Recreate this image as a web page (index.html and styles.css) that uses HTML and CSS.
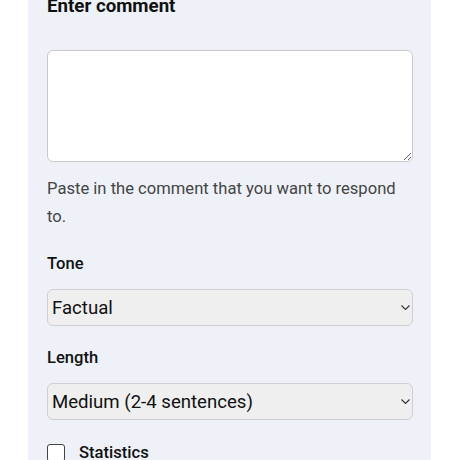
FILE: index.html
```html
<!DOCTYPE html>
<html lang="en">
<head>
    <meta charset="UTF-8">
    <meta name="viewport" content="width=device-width, initial-scale=1.0">
    <title>Comment reply</title>
    <link rel="stylesheet" href="styles.css">
</head>
<body>
    <div class="panel">
        <h2 class="title">Enter comment</h2>
        <textarea class="comment" id="comment"></textarea>
        <p class="hint">Paste in the comment that you want to respond to.</p>

        <label class="field-label" for="tone">Tone</label>
        <div class="select-wrap">
            <select class="select" id="tone">
                <option>Factual</option>
                <option>Friendly</option>
                <option>Formal</option>
            </select>
            <svg class="chevron" viewBox="0 0 9 5" width="9" height="5"><path d="M0.5 0.5l4 4 4-4" fill="none" stroke="#333" stroke-width="1.1"/></svg>
        </div>

        <label class="field-label field-label-tight" for="length">Length</label>
        <div class="select-wrap">
            <select class="select" id="length">
                <option>Medium (2-4 sentences)</option>
                <option>Short (1 sentence)</option>
                <option>Long (5+ sentences)</option>
            </select>
            <svg class="chevron" viewBox="0 0 9 5" width="9" height="5"><path d="M0.5 0.5l4 4 4-4" fill="none" stroke="#333" stroke-width="1.1"/></svg>
        </div>

        <label class="check">
            <input type="checkbox" class="check-box">
            <span>Statistics</span>
        </label>
    </div>
</body>
</html>
```

FILE: styles.css
```css
body {
    margin: 0;
    background: #ffffff;
    font-family: Roboto, 'Noto Sans', sans-serif;
    color: #111;
    overflow: hidden;
}
.panel {
    margin-left: 28px;
    width: 403px;
    box-sizing: border-box;
    padding: 0 18px 40px 19px;
    background: #eef2f8;
    display: flex;
    flex-direction: column;
    align-items: stretch;
}
.title {
    margin: -6px 0 0;
    font-size: 18.7px;
    line-height: 24px;
    font-weight: 700;
}
.comment {
    margin-top: 32px;
    height: 112px;
    box-sizing: border-box;
    border: 1px solid #c9c9cc;
    border-radius: 6px;
    background: #fff;
    resize: vertical;
}
.hint {
    margin: 13px 0 0;
    font-size: 16.6px;
    line-height: 28px;
    color: #444;
}
.field-label {
    margin-top: 23px;
    font-size: 16.6px;
    line-height: 20px;
    font-weight: 500;
}
.field-label-tight {
    margin-top: 22px;
}
.select-wrap {
    position: relative;
    margin-top: 15px;
}
.select {
    width: 100%;
    height: 37px;
    box-sizing: border-box;
    appearance: none;
    border: 1px solid #cfcfd2;
    border-radius: 6px;
    background: #efefef;
    padding: 0 4px;
    font-family: Roboto, 'Noto Sans', sans-serif;
    font-size: 18.6px;
    color: #111;
}
.chevron {
    position: absolute;
    right: 3px;
    top: 16px;
}
.check {
    margin-top: 23px;
    display: flex;
    align-items: center;
    gap: 14px;
    font-size: 16.6px;
    font-weight: 500;
}
.check-box {
    margin: 0;
    width: 18px;
    height: 18px;
    appearance: none;
    border: 1px solid #444;
    border-radius: 3px;
    background: #fff;
}
```
